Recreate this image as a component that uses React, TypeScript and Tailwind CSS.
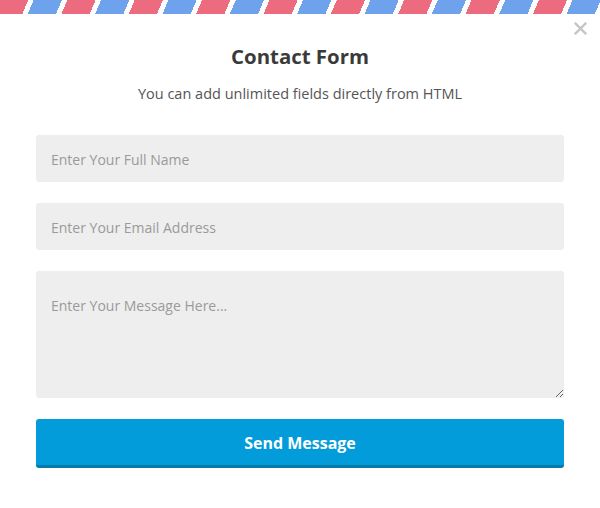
import React from 'react';

const fieldClass =
  'w-full h-[47px] px-[15px] pt-[2px] bg-[#eeeeee] rounded-[3px] text-[14px] text-[#555] placeholder:text-[#9a9a9a] outline-none border-0';

export default function App() {
  return (
    <div className="relative w-[600px] h-[508px] bg-white overflow-hidden font-['Open_Sans',sans-serif]">
      <div className="h-[14px] w-full bg-[repeating-linear-gradient(113deg,#ec6b7e_0px,#ec6b7e_26px,#ffffff_26px,#ffffff_31px,#6fa2ec_31px,#6fa2ec_57px,#ffffff_57px,#ffffff_62px)]" />

      <button className="absolute right-[13px] top-[22px] w-[13px] h-[13px] text-[#c6c6c6]" aria-label="Close">
        <svg viewBox="0 0 12 12" width="13" height="13">
          <path d="M1.5 1.5 L10.5 10.5 M10.5 1.5 L1.5 10.5" stroke="currentColor" strokeWidth="2.2" strokeLinecap="square" />
        </svg>
      </button>

      <div className="px-[36px] pt-[28px]">
        <h2 className="text-center text-[20.4px] leading-[28px] font-bold text-[#3a3a3a]">Contact Form</h2>
        <p className="mt-[14px] text-center text-[14.5px] leading-[20px] text-[#555]">
          You can add unlimited fields directly from HTML
        </p>

        <form className="mt-[31px] flex flex-col gap-[21px]" onSubmit={(e) => e.preventDefault()}>
          <input type="text" placeholder="Enter Your Full Name" className={fieldClass} />
          <input type="email" placeholder="Enter Your Email Address" className={fieldClass} />
          <textarea
            placeholder="Enter Your Message Here..."
            className="w-full h-[127px] px-[15px] pt-[24px] leading-[22px] bg-[#eeeeee] rounded-[3px] text-[14px] text-[#555] placeholder:text-[#9a9a9a] outline-none border-0 block"
          />
          <button
            type="submit"
            className="w-full h-[49px] pt-[1px] bg-[#029cdb] border-b-[3px] border-[#0879a8] rounded-[3px] text-white text-[16px] font-bold"
          >
            Send Message
          </button>
        </form>
      </div>
    </div>
  );
}
